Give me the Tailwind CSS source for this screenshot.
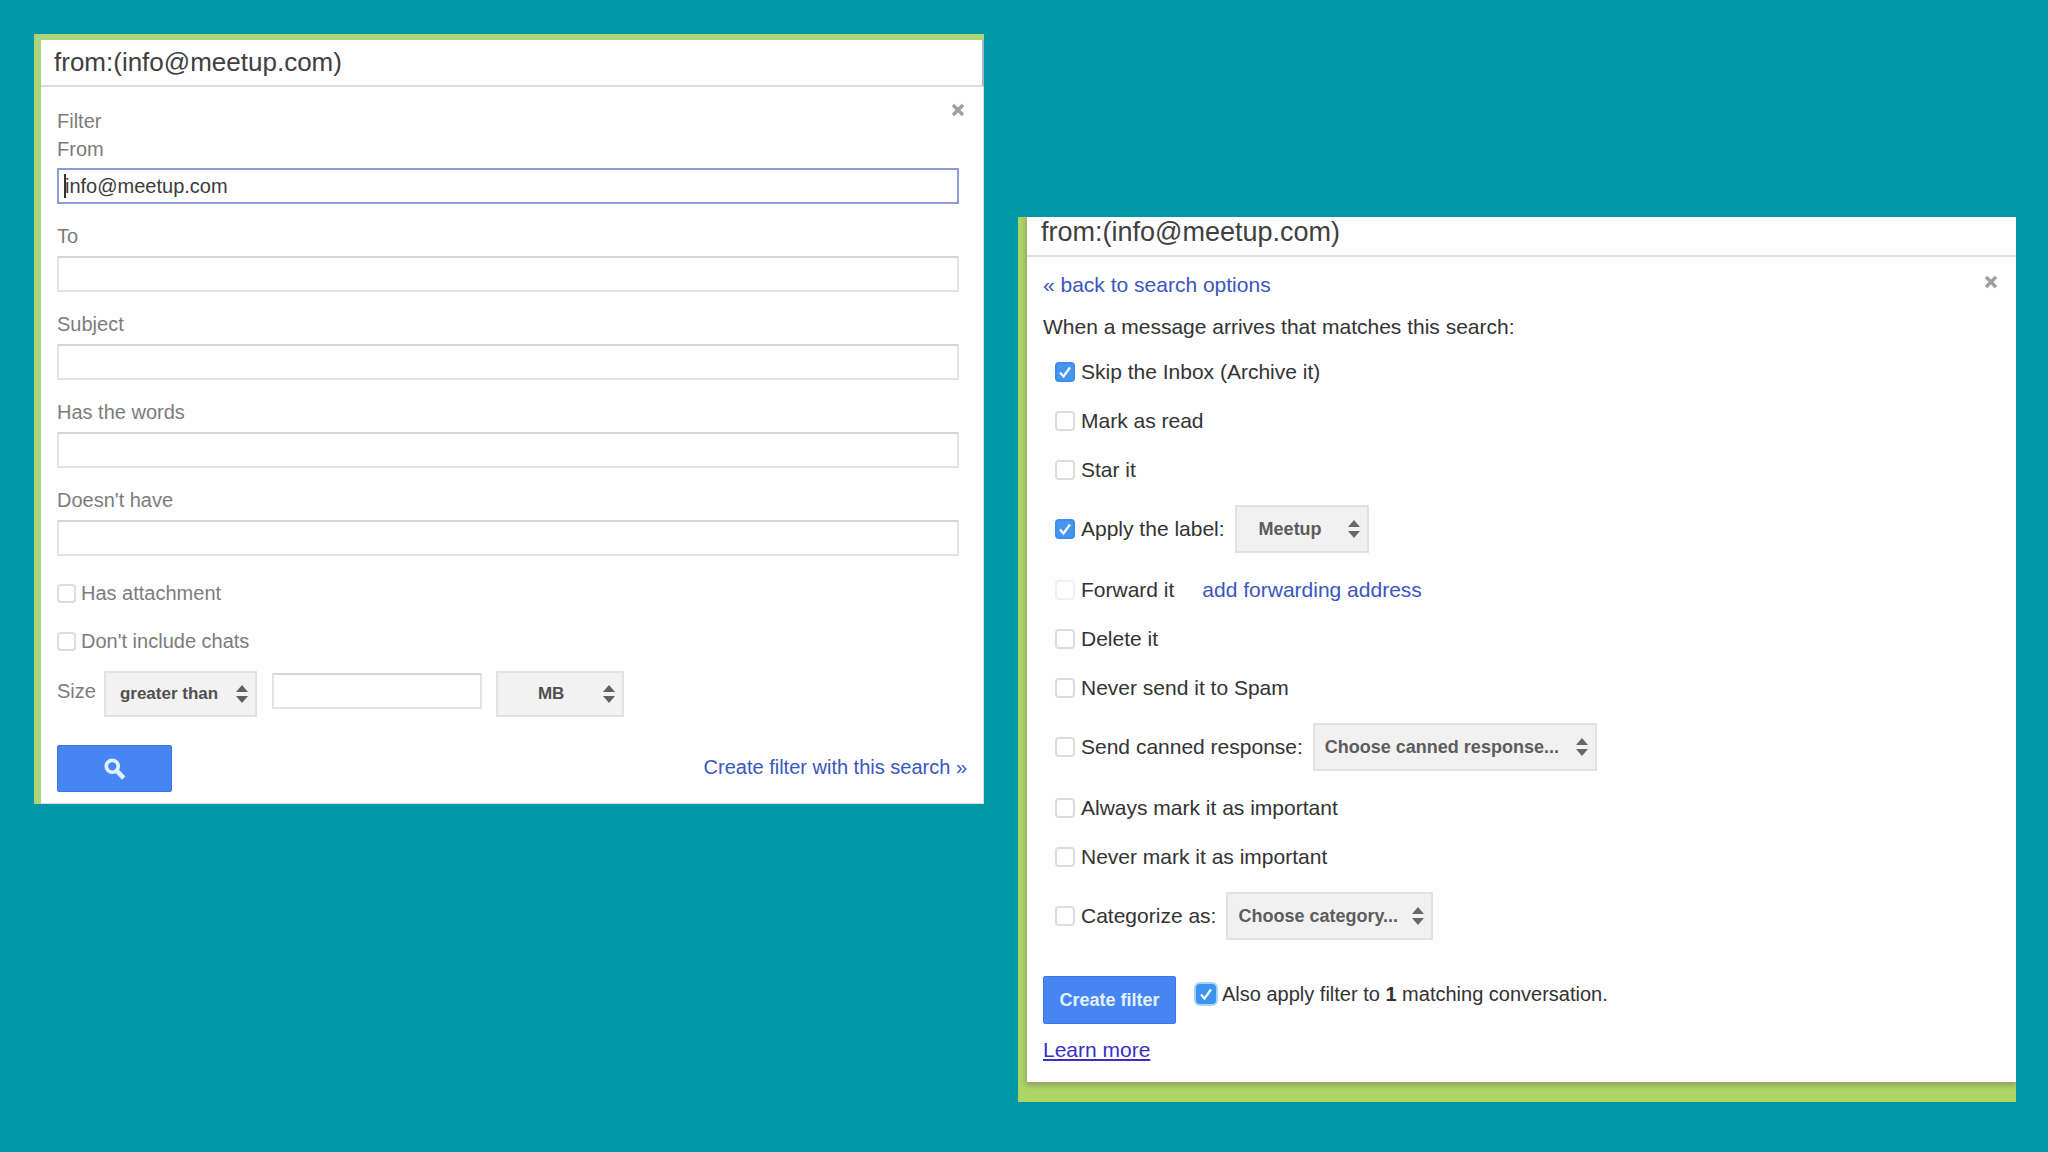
<!doctype html>
<html lang="en">
    <head>
        <meta charset="UTF-8" />
        <meta name="viewport" content="width=device-width, initial-scale=1.0" />
        <title>Mail Filters</title>
        <script src="https://cdn.jsdelivr.net/npm/@tailwindcss/browser@4"></script>
    </head>
    <body
        class="min-h-screen bg-[#0097a7] font-['Liberation_Sans',Arial,sans-serif] text-[20px] leading-7"
    >
        <!-- Shared icons -->
        <svg class="hidden">
            <symbol id="arrows" viewBox="0 0 12 18">
                <path d="M6 0 L12 7 H0 Z M0 11 H12 L6 18 Z" fill="currentColor" />
            </symbol>
            <symbol id="check" viewBox="0 0 20 20">
                <path d="M5 10.5 L8.5 14.5 L15 5.5" fill="none" stroke="#fff" stroke-width="2.2" />
            </symbol>
            <symbol id="close" viewBox="0 0 14 14">
                <path d="M2 2 L12 12 M12 2 L2 12" fill="none" stroke="currentColor" stroke-width="3.4" />
            </symbol>
        </svg>

        <main
            class="grid grid-cols-[950fr_998fr] items-start gap-[34px] py-[34px] pr-8 pl-[34px]"
        >
            <!-- Search options -->
            <form class="border-t-6 border-l-7 border-[#aed47b] bg-[#fefefe] text-[#7c7c7c]">
                <input
                    type="text"
                    aria-label="Search mail"
                    value="from:(info@meetup.com)"
                    class="block h-[47px] w-full border-r-2 border-b-2 border-r-[#9fb4cf] border-b-[#dfdbdf] px-[13px] text-[26px] text-[#404040] outline-none"
                />
                <div class="relative border-r border-b border-[#dcdcdc] pt-5 pr-6 pb-[11px] pl-4">
                    <button
                        type="button"
                        aria-label="Close"
                        class="absolute top-4 right-[18px] text-[#a0a0a0]"
                    >
                        <svg class="size-[14px]"><use href="#close" /></svg>
                    </button>
                    <h2>Filter</h2>
                    <div class="flex flex-col gap-[18px]">
                        <div class="relative">
                            <label for="from" class="mb-[5px] block">From</label>
                            <input
                                id="from"
                                type="text"
                                value="info@meetup.com"
                                class="block h-9 w-full border-2 border-[#8b9bd6] px-1.5 text-[#3c3c3c] outline-none"
                            />
                            <span class="absolute bottom-1.5 left-[7px] h-6 w-0.5 bg-[#333]"></span>
                        </div>
                        <div>
                            <label for="to" class="mb-1.5 block">To</label>
                            <input id="to" type="text" class="block h-9 w-full border-2 border-[#e3e3e6] border-t-[#d6d6d9] px-1.5" />
                        </div>
                        <div>
                            <label for="subject" class="mb-1.5 block">Subject</label>
                            <input id="subject" type="text" class="block h-9 w-full border-2 border-[#e3e3e6] border-t-[#d6d6d9] px-1.5" />
                        </div>
                        <div>
                            <label for="has" class="mb-1.5 block">Has the words</label>
                            <input id="has" type="text" class="block h-9 w-full border-2 border-[#e3e3e6] border-t-[#d6d6d9] px-1.5" />
                        </div>
                        <div>
                            <label for="not" class="mb-1.5 block">Doesn't have</label>
                            <input id="not" type="text" class="block h-9 w-full border-2 border-[#e3e3e6] border-t-[#d6d6d9] px-1.5" />
                        </div>
                    </div>

                    <div class="mt-[23px] flex flex-col gap-5">
                        <label class="flex items-center gap-[5px]">
                            <input type="checkbox" class="size-[19px] appearance-none rounded border-2 border-[#dcdcdc] bg-white" />
                            Has attachment
                        </label>
                        <label class="flex items-center gap-[5px]">
                            <input type="checkbox" class="size-[19px] appearance-none rounded border-2 border-[#dcdcdc] bg-white" />
                            Don't include chats
                        </label>
                    </div>

                    <div class="mt-4 flex items-start">
                        <label for="size" class="mt-1.5 mr-2">Size</label>
                        <div class="relative mr-[15px] w-[153px]">
                            <select
                                aria-label="Size comparison"
                                class="block h-[46px] w-full appearance-none border-2 border-[#e2e2e2] bg-[#f2f2f2] pl-[14px] text-[17px] font-bold text-[#505050]"
                            >
                                <option>greater than</option>
                                <option>less than</option>
                            </select>
                            <svg class="pointer-events-none absolute top-[14px] right-[9px] h-[18px] w-3 text-[#606060]"><use href="#arrows" /></svg>
                        </div>
                        <input id="size" type="text" class="mt-0.5 mr-[14px] h-9 w-[210px] border-2 border-[#e3e3e6] border-t-[#d6d6d9] px-1.5" />
                        <div class="relative w-[128px]">
                            <select
                                aria-label="Size unit"
                                class="block h-[46px] w-full appearance-none border-2 border-[#e2e2e2] bg-[#f2f2f2] pl-10 text-[17px] font-bold text-[#505050]"
                            >
                                <option>MB</option>
                                <option>KB</option>
                                <option>Bytes</option>
                            </select>
                            <svg class="pointer-events-none absolute top-[14px] right-[9px] h-[18px] w-3 text-[#606060]"><use href="#arrows" /></svg>
                        </div>
                    </div>

                    <div class="-mr-2 mt-7 flex items-start justify-between">
                        <button
                            type="submit"
                            aria-label="Search"
                            class="flex h-[47px] w-[115px] items-center justify-center rounded-xs border border-[#3b78e0] bg-[#4785f2]"
                        >
                            <svg class="size-[22px]" viewBox="0 0 24 24" fill="none" stroke="#dff0ff">
                                <circle cx="9" cy="9" r="6.5" stroke-width="4" />
                                <path d="M14 14 L21.5 22" stroke-width="5" />
                            </svg>
                        </button>
                        <a href="#filter" class="mt-2 text-[#3a56c0]">Create filter with this search »</a>
                    </div>
                </div>
            </form>

            <!-- Filter actions -->
            <form
                id="filter"
                class="mt-[183px] overflow-hidden bg-[#aed665] pb-5 pl-[9px] text-[21px] text-[#333]"
            >
                <div class="bg-[#fefefe] shadow-[0_2px_6px_1px_#8b9c62]">
                    <input
                        type="text"
                        aria-label="Search mail"
                        value="from:(info@meetup.com)"
                        class="block h-10 w-full border-b-2 border-[#dedede] px-[14px] pb-2 text-[27px] text-[#404040] outline-none"
                    />
                    <div class="relative pt-[14px] pb-[18px] pl-4">
                        <button
                            type="button"
                            aria-label="Close"
                            class="absolute top-[18px] right-[18px] text-[#a0a0a0]"
                        >
                            <svg class="size-[14px]"><use href="#close" /></svg>
                        </button>
                        <a href="#" class="text-[#3a56c0]">« back to search options</a>
                        <p class="mt-[14px]">When a message arrives that matches this search:</p>

                        <div class="mt-[17px] flex flex-col gap-[21px] pl-3">
                            <label class="flex items-center gap-1.5">
                                <span class="relative size-5">
                                    <input type="checkbox" checked class="block size-5 appearance-none rounded border-2 border-[#dcdcdc] bg-white checked:border-[#3f8de8] checked:bg-[#4496f0]" />
                                    <svg class="pointer-events-none absolute inset-0 size-5"><use href="#check" /></svg>
                                </span>
                                Skip the Inbox (Archive it)
                            </label>
                            <label class="flex items-center gap-1.5">
                                <input type="checkbox" class="size-5 appearance-none rounded border-2 border-[#dcdcdc] bg-white" />
                                Mark as read
                            </label>
                            <label class="flex items-center gap-1.5">
                                <input type="checkbox" class="size-5 appearance-none rounded border-2 border-[#dcdcdc] bg-white" />
                                Star it
                            </label>
                            <div class="mb-0.5 flex items-center gap-2.5">
                                <label class="flex items-center gap-1.5">
                                    <span class="relative size-5">
                                        <input type="checkbox" checked class="block size-5 appearance-none rounded border-2 border-[#dcdcdc] bg-white checked:border-[#3f8de8] checked:bg-[#4496f0]" />
                                        <svg class="pointer-events-none absolute inset-0 size-5"><use href="#check" /></svg>
                                    </span>
                                    Apply the label:
                                </label>
                                <div class="relative w-[134px]">
                                    <select
                                        aria-label="Label"
                                        class="block h-12 w-full appearance-none border-2 border-[#e2e0e2] bg-[#f2f1f2] pl-[22px] text-[18px] font-bold text-[#5c5c5c]"
                                    >
                                        <option>Meetup</option>
                                    </select>
                                    <svg class="pointer-events-none absolute top-[15px] right-[9px] h-[18px] w-3 text-[#686868]"><use href="#arrows" /></svg>
                                </div>
                            </div>
                            <div class="flex items-center gap-7">
                                <label class="flex items-center gap-1.5">
                                    <input type="checkbox" class="size-5 appearance-none rounded border-2 border-[#f0f0f0] bg-white" />
                                    Forward it
                                </label>
                                <a href="#" class="text-[#3a56c0]">add forwarding address</a>
                            </div>
                            <label class="flex items-center gap-1.5">
                                <input type="checkbox" class="size-5 appearance-none rounded border-2 border-[#dcdcdc] bg-white" />
                                Delete it
                            </label>
                            <label class="flex items-center gap-1.5">
                                <input type="checkbox" class="size-5 appearance-none rounded border-2 border-[#dcdcdc] bg-white" />
                                Never send it to Spam
                            </label>
                            <div class="mb-0.5 flex items-center gap-2.5">
                                <label class="flex items-center gap-1.5">
                                    <input type="checkbox" class="size-5 appearance-none rounded border-2 border-[#dcdcdc] bg-white" />
                                    Send canned response:
                                </label>
                                <div class="relative w-[284px]">
                                    <select
                                        aria-label="Canned response"
                                        class="block h-12 w-full appearance-none border-2 border-[#e2e0e2] bg-[#f2f1f2] pl-2.5 text-[18px] font-bold text-[#5c5c5c]"
                                    >
                                        <option>Choose canned response...</option>
                                    </select>
                                    <svg class="pointer-events-none absolute top-[15px] right-[9px] h-[18px] w-3 text-[#686868]"><use href="#arrows" /></svg>
                                </div>
                            </div>
                            <label class="flex items-center gap-1.5">
                                <input type="checkbox" class="size-5 appearance-none rounded border-2 border-[#dcdcdc] bg-white" />
                                Always mark it as important
                            </label>
                            <label class="flex items-center gap-1.5">
                                <input type="checkbox" class="size-5 appearance-none rounded border-2 border-[#dcdcdc] bg-white" />
                                Never mark it as important
                            </label>
                            <div class="flex items-center gap-2.5">
                                <label class="flex items-center gap-1.5">
                                    <input type="checkbox" class="size-5 appearance-none rounded border-2 border-[#dcdcdc] bg-white" />
                                    Categorize as:
                                </label>
                                <div class="relative w-[207px]">
                                    <select
                                        aria-label="Category"
                                        class="block h-12 w-full appearance-none border-2 border-[#e2e0e2] bg-[#f2f1f2] pl-2.5 text-[18px] font-bold text-[#5c5c5c]"
                                    >
                                        <option>Choose category...</option>
                                    </select>
                                    <svg class="pointer-events-none absolute top-[15px] right-[9px] h-[18px] w-3 text-[#686868]"><use href="#arrows" /></svg>
                                </div>
                            </div>
                        </div>

                        <div class="mt-9 flex items-start gap-5">
                            <button
                                type="submit"
                                class="h-12 w-[133px] rounded-xs border border-[#3b78e0] bg-[#4785f2] text-[18px] font-bold text-[#e6f1ff]"
                            >
                                Create filter
                            </button>
                            <label class="mt-1 flex items-center gap-1.5 text-[20px]">
                                <span class="relative size-5">
                                    <input type="checkbox" checked class="block size-5 appearance-none rounded bg-white ring-2 ring-[#a6d4fb] checked:bg-[#3c93f0]" />
                                    <svg class="pointer-events-none absolute inset-0 size-5"><use href="#check" /></svg>
                                </span>
                                <span>Also apply filter to <b>1</b> matching conversation.</span>
                            </label>
                        </div>
                        <a href="#" class="mt-3 inline-block text-[#3a2fc4] underline">Learn more</a>
                    </div>
                </div>
            </form>
        </main>
    </body>
</html>
